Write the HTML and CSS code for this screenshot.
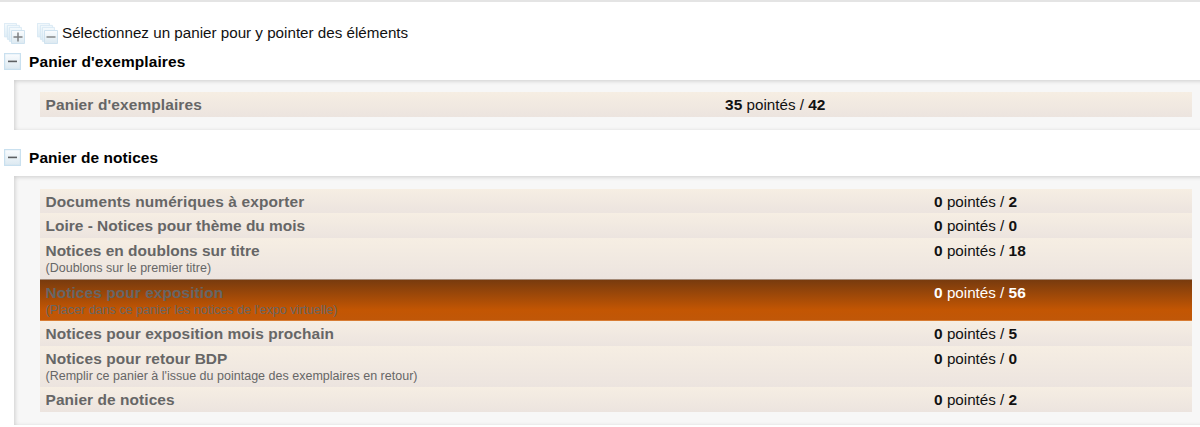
FILE: index.html
```html
<!DOCTYPE html>
<html lang="fr">
<head>
<meta charset="utf-8">
<title>Paniers</title>
<link rel="stylesheet" href="styles.css">
</head>
<body>
<svg class="defs" aria-hidden="true">
  <defs>
    <linearGradient id="tile" x1="0" y1="0" x2="0" y2="1"><stop offset="0" stop-color="#fafcfe"/><stop offset="1" stop-color="#dce9f1"/></linearGradient>
    <linearGradient id="sheet" x1="0" y1="0" x2="0" y2="1"><stop offset="0" stop-color="#f4fafd"/><stop offset="1" stop-color="#dfedf6"/></linearGradient>
    <g id="stack">
      <g fill="url(#sheet)" stroke="#d3e6f2" stroke-width=".8"><path d="M.4 .4h12v13.5H.4z"/><path d="M3.4 2.4h12v14h-12z"/><path d="M5.4 4.4h12v14h-12z"/></g>
      <path d="M7.5 7.5h13v13h-13z" fill="url(#tile)" stroke="#cfe2ef"/>
    </g>
  </defs>
</svg>
<header class="toolbar">
  <svg class="stack" viewBox="0 0 21 21"><use href="#stack"/><path d="M9.5 14h9M14 9.5v9" stroke="#7d7f81" stroke-width="1.5"/></svg>
  <svg class="stack" viewBox="0 0 21 21"><use href="#stack"/><path d="M9.5 14h9" stroke="#8b8d8f" stroke-width="1.6"/></svg>
  <span class="prompt">Sélectionnez un panier pour y pointer des éléments</span>
</header>
<main>
  <section class="group">
    <h2 class="heading wide"><svg class="toggle" viewBox="0 0 17 17"><path d="M.6.6h15.8v15.8H.6z" fill="url(#tile)" stroke="#c9e0ef" stroke-width="1.2"/><path d="M4 8.4h9" stroke="#5d6063" stroke-width="1.6"/></svg><span>Panier d'exemplaires</span></h2>
    <div class="panel copies">
      <div class="row"><div class="name wide">Panier d'exemplaires</div><div class="count"><b>35</b> pointés / <b>42</b></div></div>
    </div>
  </section>
  <section class="group">
    <h2 class="heading"><svg class="toggle" viewBox="0 0 17 17"><path d="M.6.6h15.8v15.8H.6z" fill="url(#tile)" stroke="#c9e0ef" stroke-width="1.2"/><path d="M4 8.4h9" stroke="#5d6063" stroke-width="1.6"/></svg><span>Panier de notices</span></h2>
    <div class="panel">
      <div class="row"><div class="name wide">Documents numériques à exporter</div><div class="count"><b>0</b> pointés / <b>2</b></div></div>
      <div class="row"><div class="name snug">Loire - Notices pour thème du mois</div><div class="count"><b>0</b> pointés / <b>0</b></div></div>
      <div class="row tall"><div class="name snug">Notices en doublons sur titre<small>(Doublons sur le premier titre)</small></div><div class="count"><b>0</b> pointés / <b>18</b></div></div>
      <div class="row tall active"><div class="name">Notices pour exposition<small>(Placer dans ce panier les notices de l'expo virtuelle)</small></div><div class="count"><b>0</b> pointés / <b>56</b></div></div>
      <div class="row"><div class="name">Notices pour exposition mois prochain</div><div class="count"><b>0</b> pointés / <b>5</b></div></div>
      <div class="row tall"><div class="name">Notices pour retour BDP<small>(Remplir ce panier à l'issue du pointage des exemplaires en retour)</small></div><div class="count"><b>0</b> pointés / <b>0</b></div></div>
      <div class="row"><div class="name">Panier de notices</div><div class="count"><b>0</b> pointés / <b>2</b></div></div>
    </div>
  </section>
</main>
</body>
</html>
```
FILE: styles.css
```css
* { box-sizing: border-box; }
body {
  margin: 0;
  height: 427px;
  overflow: hidden;
  background: #fff;
  border-top: 2px solid #e4e4e4;
  color: #111;
  font: 15.2px/18px "Liberation Sans", Arial, sans-serif;
}
.defs { display: block; width: 0; height: 0; }
.toolbar {
  display: flex;
  height: 51px;
  padding: 21px 0 0 4px;
}
.stack { width: 21px; height: 21px; margin-right: 12px; }
.stack + .stack { margin-right: 4px; }
.prompt { padding-top: 1px; }
.group { margin-bottom: 19px; }
.heading {
  display: flex;
  gap: 8px;
  height: 27px;
  margin: 0;
  padding-left: 4px;
  font-size: 15.45px;
  font-weight: bold;
  letter-spacing: .08px;
  color: #000;
}
.toggle { width: 17px; height: 17px; }
.panel {
  margin: 0 -10px 0 14px;
  padding: 12.5px 18px 13px 25.5px;
  background: #f7f7f7;
  box-shadow: inset 1px 1px 4px #ccc;
}
.row {
  display: grid;
  grid-template-columns: 888.5px 1fr;
  height: 24.5px;
  padding: 4px 0 0 6px;
  background: linear-gradient(#f6eee3, #ece4df);
}
.copies { padding-top: 12px; padding-bottom: 13.5px; }
.copies .row { grid-template-columns: 679.5px 1fr; padding-top: 4px; }
.tall { height: 41.8px; }
.name { font-size: 15.45px; font-weight: bold; letter-spacing: .08px; color: #666; }
.wide { letter-spacing: .13px; }
.snug { letter-spacing: .02px; }
.count b { font-size: 15.45px; letter-spacing: .08px; }
.name small {
  display: block;
  font-size: 12.5px;
  font-weight: normal;
  line-height: 17px;
  letter-spacing: .01px;
}
.active {
  background: linear-gradient(#783b0e, #c35603 75%, #c05708);
  border-top: 1px solid #a58b78;
  border-bottom: 1px solid #d87c32;
  padding-top: 3.5px;
}
.active .count { color: #fff; }
```
